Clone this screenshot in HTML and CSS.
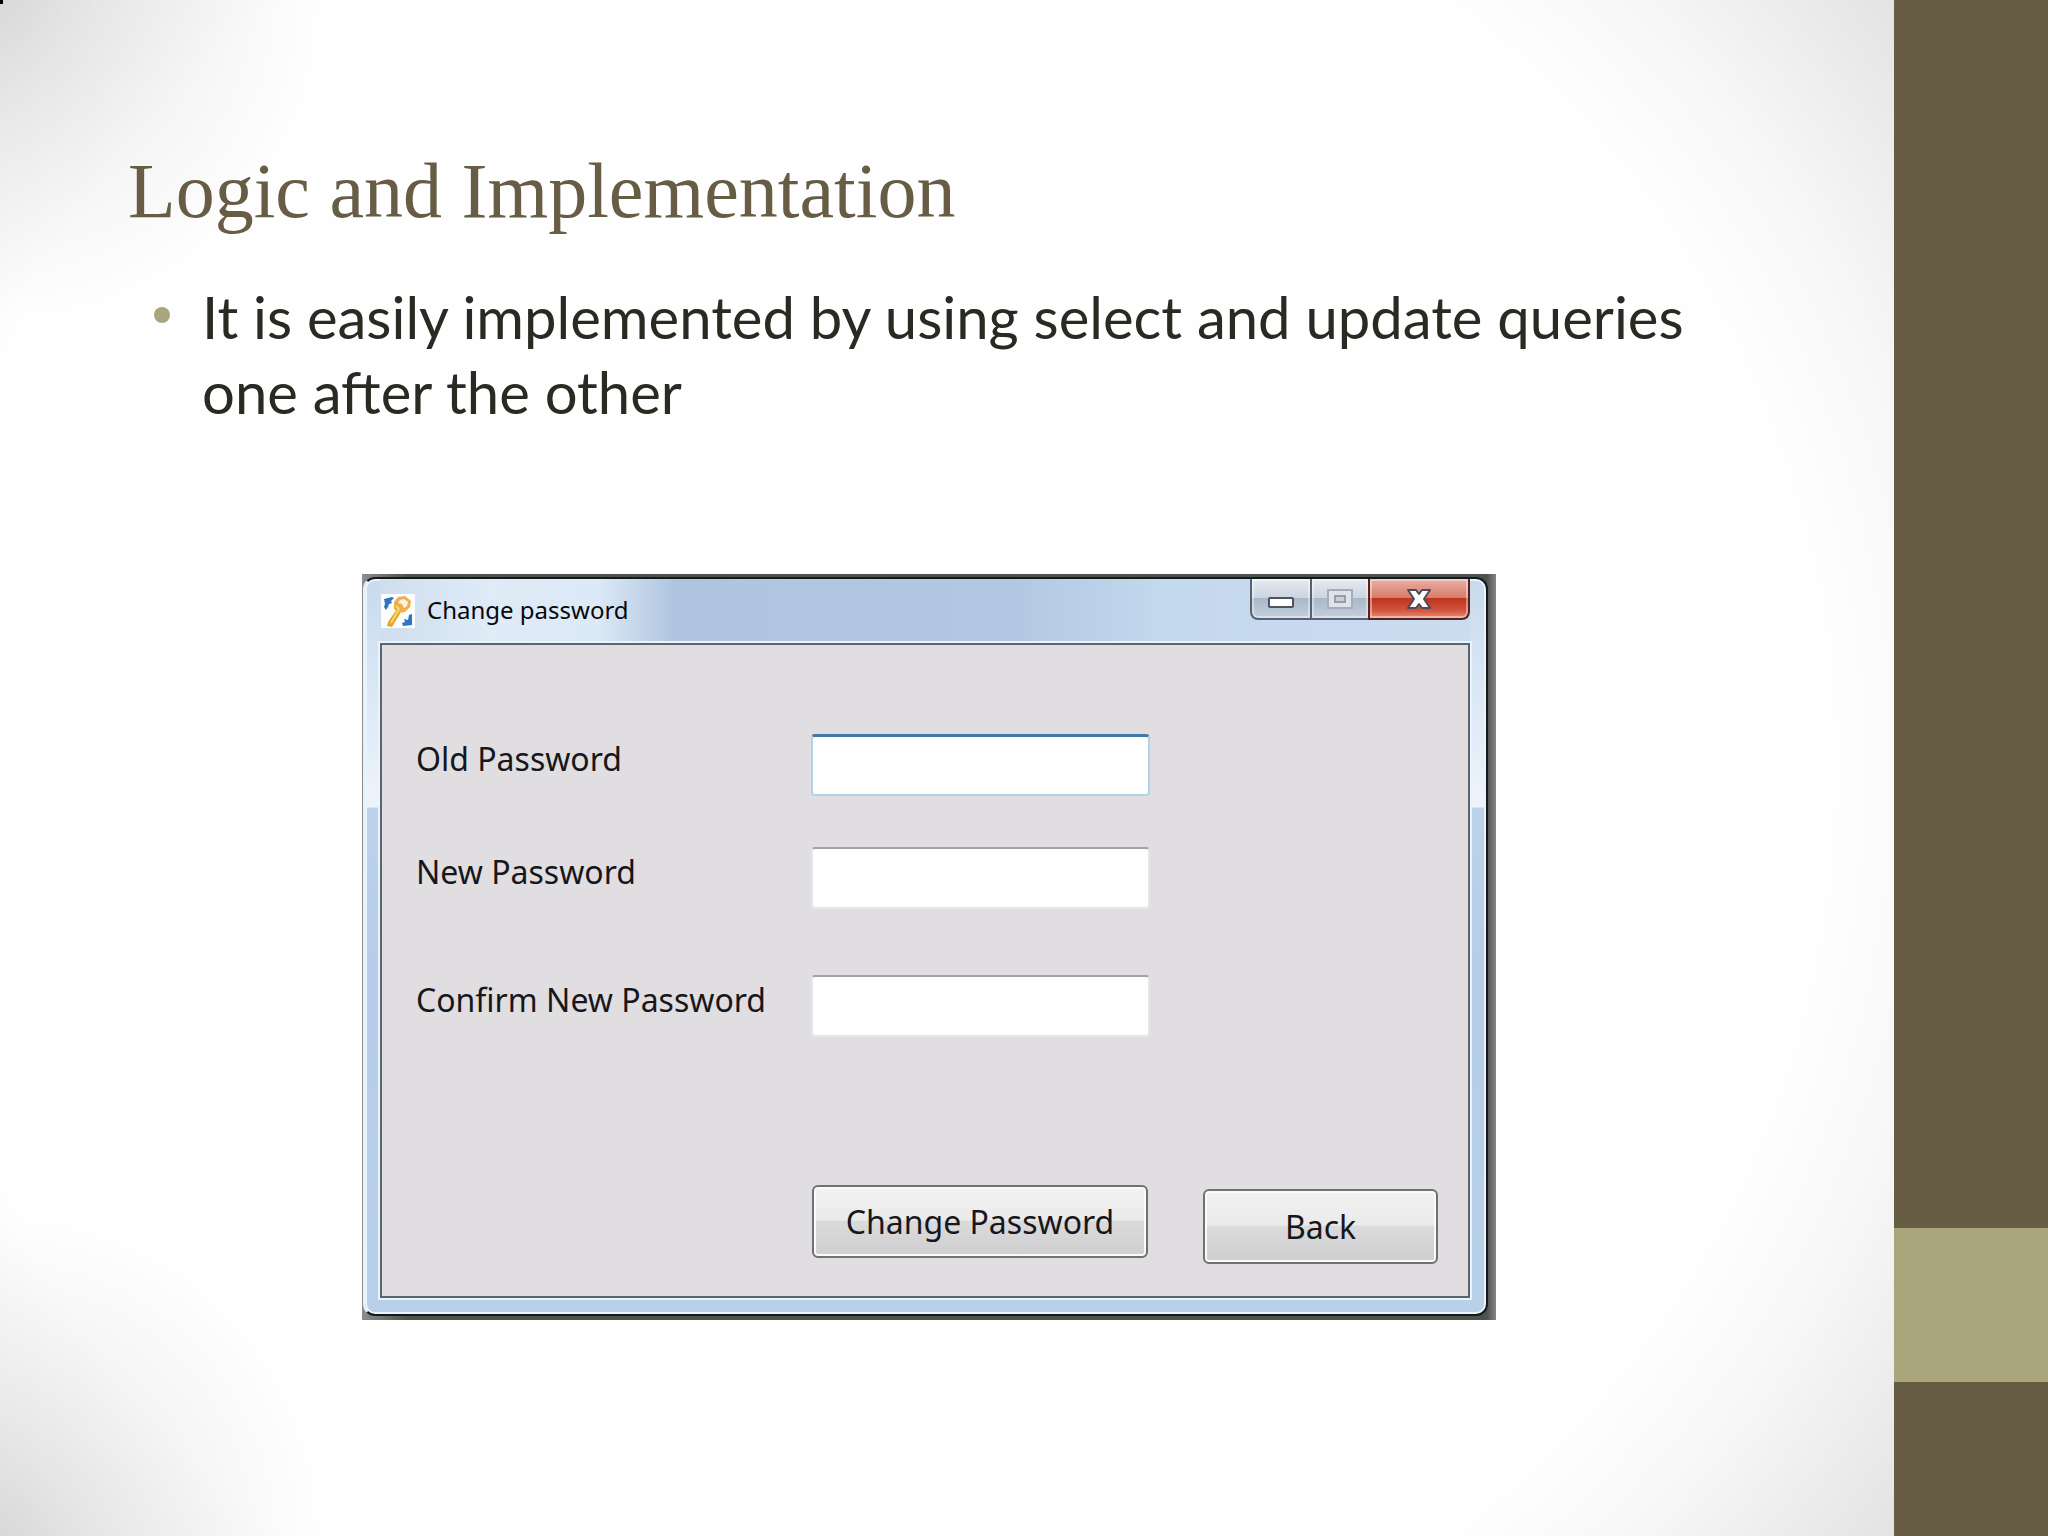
FILE: index.html
```html
<!DOCTYPE html>
<html lang="en">
<head>
<meta charset="utf-8">
<title>Logic and Implementation</title>
<link rel="stylesheet" href="styles.css">
</head>
<body>
<div class="slide">
  <main class="content">
    <h1 class="title">Logic and Implementation</h1>
    <ul class="points">
      <li class="point">It is easily implemented by using select and update queries one after the other</li>
    </ul>
    <section class="backdrop" aria-labelledby="dialog-title">
      <div class="window">
        <header class="titlebar">
          <svg class="app-icon" viewBox="0 0 34 34" aria-hidden="true">
            <rect width="34" height="34" fill="#fdfdfd"/>
            <path d="M3 5l8-2 2 1-3 3 1 2-3 1-1 3-2 3-2-3 1-3z" fill="#2d74c4"/>
            <path d="M31 20v11l-9 1-1-3 3-1-1-3 4 1 1-5z" fill="#2d74c4"/>
            <path d="M16 15l4 3-9 15-5-1 1-4z" fill="#e5a52c"/>
            <path d="M13 8l4-5 7-1 6 5-1 6-5 5-6 1-5-4z" fill="#eeb04a"/>
            <path d="M19 6l4-1 4 3-1 4-3 2-2-4-4-1z" fill="#fbf3e2"/>
            <path d="M15 12l3 3-8 14" fill="none" stroke="#f8d56d" stroke-width="2"/>
          </svg>
          <h2 class="caption" id="dialog-title">Change password</h2>
          <div class="controls">
            <button class="control minimize" type="button" aria-label="Minimize">
              <svg class="minimize-glyph" viewBox="0 0 26 12" aria-hidden="true"><rect x="1" y="1" width="24" height="9" rx="1" fill="#fff" stroke="#4d5363" stroke-width="2"/></svg>
            </button>
            <button class="control maximize" type="button" aria-label="Maximize" disabled>
              <svg class="maximize-glyph" viewBox="0 0 26 20" aria-hidden="true"><rect x="1" y="1" width="24" height="18" fill="#dfe3e9" stroke="#a6adba" stroke-width="2"/><rect x="8" y="7" width="10" height="6" fill="#c9d0da" stroke="#969eac" stroke-width="2"/></svg>
            </button>
            <button class="control close" type="button" aria-label="Close">
              <svg class="close-glyph" viewBox="0 0 24 20" aria-hidden="true"><path d="M1 1h8l3 4 3-4h8l-6 9 6 9h-8l-3-4-3 4H1l6-9z" fill="#fff" stroke="#4f4a5c" stroke-width="2" stroke-linejoin="round"/></svg>
            </button>
          </div>
        </header>
        <form class="form">
          <div class="field">
            <label class="label" for="old">Old Password</label>
            <input class="input active" id="old" type="password">
          </div>
          <div class="field">
            <label class="label" for="new">New Password</label>
            <input class="input" id="new" type="password">
          </div>
          <div class="field last">
            <label class="label" for="confirm">Confirm New Password</label>
            <input class="input" id="confirm" type="password">
          </div>
          <div class="actions">
            <button class="button submit" type="button">Change Password</button>
            <button class="button back" type="button">Back</button>
          </div>
        </form>
      </div>
    </section>
  </main>
  <aside class="band"><div class="accent"></div></aside>
</div>
</body>
</html>
```
FILE: styles.css
```css
* { box-sizing: border-box; }
body { margin: 0; }

.slide {
  display: grid;
  grid-template-columns: minmax(0, 1fr) 154px;
  min-height: 100vh;
}

/* White sheet with shaded corners; the left corners are a little darker */
.content {
  padding: 144px 128px 128px;
  background:
    linear-gradient(#000, #000) 0 0 / 3px 4px no-repeat,
    radial-gradient(circle at 0 0, #00000018, #0000 320px),
    radial-gradient(circle at 0 100%, #00000018, #0000 320px),
    radial-gradient(ellipse 52% 64% at 46% 50%, #fefefe 98%, #f7f7f8 110%, #e4e4e5 129%);
}

.title {
  margin: 0;
  font: 400 78px/94px "Liberation Serif", serif;
  color: #675d45;
}

.points {
  margin: 41px 0 0;
  padding: 0 0 0 26px;
  list-style: none;
}

.point {
  display: flex;
  gap: 32px;
  font: 400 58px/75px Lato, sans-serif;
  color: #2a2922;
}

.point::before {
  content: "";
  flex: none;
  width: 16px;
  height: 16px;
  margin-top: 28px;
  border-radius: 50%;
  background: #a9a57c;
}

/* Strip of desktop visible around the dialog */
.backdrop {
  max-width: 1134px;
  margin: 145px 0 0 234px;
  padding: 3px 8px 4px 1px;
  background:
    linear-gradient(90deg, #4c4c4c, #858585) 100% 0 / 10px 100% no-repeat,
    linear-gradient(90deg, #8d8d8d, #4a544c 4%);
}

.window {
  padding: 0 16px 16px 15px;
  border: 2px solid #15191c;
  border-left-color: #e8f1fa;
  border-radius: 12px;
  background: linear-gradient(180deg, #c9daec 0, #d5e4f3 80px, #eef4fb 228px, #bcd3ea 229px, #b6cce8 400px, #b9d0e9 100%);
  box-shadow: inset 0 0 0 2px #eaf4fc;
}

.titlebar {
  display: flex;
  align-items: flex-start;
  height: 64px;
  background: linear-gradient(90deg, #cfdeee 0, #dfebf7 10%, #dce9f6 20%, #afc5df 27%, #b2c8e2 58%, #c4d8ee 72%, #cbdcf0 100%);
}

.app-icon { width: 34px; height: 34px; margin: 15px 0 0 1px; }

.caption {
  flex: 1;
  margin: 14px 0 0 12px;
  font: 400 24px/34px "Noto Sans", sans-serif;
  color: #08080c;
}

.controls { display: flex; height: 41px; }

.control {
  display: grid;
  place-items: center;
  width: 58px;
  padding: 0;
  border: 2px solid #596273;
  border-width: 0 0 2px 2px;
  background: linear-gradient(#e4eaf2, #ccd5e0 48%, #a9b7c6 50%, #c3d0df);
  box-shadow: inset 0 0 0 2px #ffffff66;
}

.minimize { width: 60px; border-bottom-left-radius: 8px; }

.close {
  width: 102px;
  border-color: #5a2020;
  border-right-width: 2px;
  border-bottom-right-radius: 8px;
  background: linear-gradient(#eab0a4, #d77b6b 48%, #bd3420 50%, #d0543c 80%, #e58e74);
}

.minimize-glyph { width: 26px; height: 12px; margin-top: 8px; }
.maximize-glyph { width: 26px; height: 20px; }
.close-glyph { width: 24px; height: 20px; }

.form {
  padding: 89px 30px 32px 34px;
  border: 2px solid #5b6470;
  background: #e0dee0;
  box-shadow: 0 0 0 2px #eaf4fc;
}

.field {
  display: grid;
  grid-template-columns: 395px 339px;
  align-items: start;
  margin-bottom: 51px;
}

.last { margin-top: 66px; }

.label {
  font: 400 32px/50px "Noto Sans", sans-serif;
  color: #17171b;
}

.input {
  height: 62px;
  padding: 0 12px;
  border: 2px solid #e6e6e8;
  border-top-color: #a3a1a6;
  border-radius: 4px;
  outline: 0;
  background: #fff;
  font: 400 32px/40px "Noto Sans", sans-serif;
}

.active {
  border-color: #b0d3ea;
  border-top: 3px solid #4179ac;
}

.actions {
  display: grid;
  grid-template-columns: 336px 235px;
  justify-content: end;
  gap: 55px;
  margin-top: 148px;
}

.button {
  height: 73px;
  padding: 0;
  border: 2px solid #717173;
  border-radius: 6px;
  background: linear-gradient(#f3f2f3, #ebeaeb 48%, #dcdbdc 50%, #cecdcf);
  box-shadow: inset 0 0 0 2px #fafafa;
  font: 400 32px/40px "Noto Sans", sans-serif;
  color: #17171b;
}

.back { height: 75px; margin-top: 4px; }

.band {
  display: flex;
  flex-direction: column;
  justify-content: flex-end;
  padding-bottom: 154px;
  background: #675d45;
}

.accent { height: 154px; background: #a9a57c; }
```
